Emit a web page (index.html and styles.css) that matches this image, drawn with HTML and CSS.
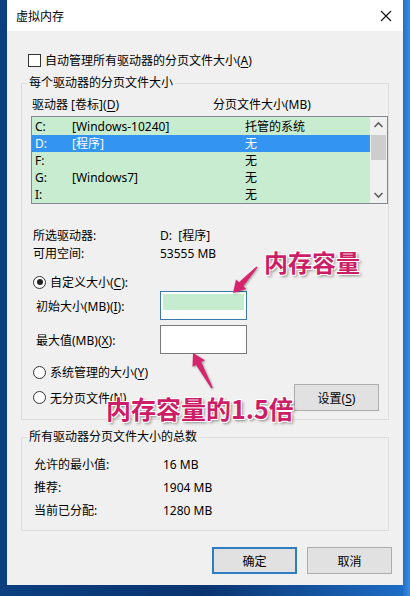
FILE: index.html
```html
<!DOCTYPE html>
<html lang="zh-CN">
<head>
  <meta charset="UTF-8" />
  <meta name="viewport" content="width=device-width, initial-scale=1.0" />
  <title>虚拟内存</title>
  <link rel="stylesheet" href="styles.css">
</head>
<body>
  <div class="desktop">
    <div class="window">
      <div class="titlebar">
        <span class="title">虚拟内存</span>
        <svg class="close" width="12" height="12" viewBox="0 0 12 12">
          <path d="M1 1 L11 11 M11 1 L1 11" stroke="#111" stroke-width="1.1" fill="none" />
        </svg>
      </div>

      <div class="content">
        <label class="check-row"><span class="checkbox"></span>自动管理所有驱动器的分页文件大小(<u>A</u>)</label>

        <!-- per drive -->
        <fieldset class="group">
          <legend>每个驱动器的分页文件大小</legend>
          <div class="list-head">
            <span class="col-head">驱动器 [卷标](<u>D</u>)</span>
            <span>分页文件大小(MB)</span>
          </div>
          <div class="listbox">
            <div class="rows">
              <div class="row"><span class="c-drive">C:</span><span class="c-label">[Windows-10240]</span><span>托管的系统</span></div>
              <div class="row selected"><span class="c-drive">D:</span><span class="c-label">[程序]</span><span>无</span></div>
              <div class="row"><span class="c-drive">F:</span><span class="c-label"></span><span>无</span></div>
              <div class="row"><span class="c-drive">G:</span><span class="c-label">[Windows7]</span><span>无</span></div>
              <div class="row"><span class="c-drive">I:</span><span class="c-label"></span><span>无</span></div>
            </div>
            <div class="scrollbar">
              <svg class="arrow" width="17" height="17" viewBox="0 0 17 17"><path d="M4.5 10 L8.5 6 L12.5 10" stroke="#606060" stroke-width="1.6" fill="none" /></svg>
              <div class="track"><div class="thumb"></div></div>
              <svg class="arrow" width="17" height="17" viewBox="0 0 17 17"><path d="M4.5 7 L8.5 11 L12.5 7" stroke="#606060" stroke-width="1.6" fill="none" /></svg>
            </div>
          </div>

          <div class="info">
            <div class="info-row"><span class="info-label">所选驱动器:</span><span>D:&nbsp;&nbsp;[程序]</span></div>
            <div class="info-row"><span class="info-label">可用空间:</span><span>53555 MB</span></div>
          </div>

          <label class="radio-row first"><span class="radio checked"></span>自定义大小(<u>C</u>):</label>
          <div class="field-row">
            <span class="field-label">初始大小(MB)(<u>I</u>):</span>
            <div class="textbox focused"><span class="fill"></span></div>
          </div>
          <div class="field-row">
            <span class="field-label">最大值(MB)(<u>X</u>):</span>
            <div class="textbox"></div>
          </div>
          <label class="radio-row"><span class="radio"></span>系统管理的大小(<u>Y</u>)</label>
          <div class="last-row">
            <label class="radio-line"><span class="radio"></span>无分页文件(<u>N</u>)</label>
            <button class="btn btn-set">设置(<u>S</u>)</button>
          </div>
        </fieldset>

        <!-- totals -->
        <fieldset class="group totals">
          <legend>所有驱动器分页文件大小的总数</legend>
          <div class="total-row"><span class="total-label">允许的最小值:</span><span>16 MB</span></div>
          <div class="total-row"><span class="total-label">推荐:</span><span>1904 MB</span></div>
          <div class="total-row"><span class="total-label">当前已分配:</span><span>1280 MB</span></div>
        </fieldset>

        <div class="actions">
          <button class="btn btn-default">确定</button>
          <button class="btn">取消</button>
        </div>
      </div>
    </div>

    <!-- annotations drawn over the screenshot -->
    <div class="note note-mem">内存容量</div>
    <div class="note note-max">内存容量的1.5倍</div>
    <svg class="pointers" width="410" height="596" viewBox="0 0 410 596">
      <polygon points="233,293 246.3,288.9 243.3,286.2 257.5,267.5 256.5,266.5 238.9,282.2 236,279.4" />
      <polygon points="193,353 204.9,360.2 201.3,362.1 212.7,387.6 211.3,388.4 196.1,364.9 192.5,366.8" />
    </svg>
  </div>
</body>
</html>
```

FILE: styles.css
```css
body {
  margin: 0;
  font-family: "Noto Sans", "Noto Sans CJK SC", sans-serif;
  font-size: 12px;
  color: #000;
}
u {
  text-decoration-thickness: 1px;
  text-underline-offset: 2px;
}
.desktop {
  position: relative;
  width: 410px;
  height: 596px;
  overflow: hidden;
  background: linear-gradient(90deg, #0b3f80 0%, #0a3470 50%, #1d6cc4 98%, #3a8de0 100%);
}
.window {
  margin-left: 7px;
  width: 396px;
  height: 585px;
  background: #f0f0f0;
  box-sizing: border-box;
}
.titlebar {
  height: 31px;
  background: #fff;
  display: flex;
  align-items: center;
  justify-content: space-between;
  padding: 0 11px 0 9px;
}
.title {
  font-size: 12px;
}
.content {
  padding: 0 14px;
}
.check-row {
  display: flex;
  align-items: center;
  height: 16px;
  margin-top: 21px;
  padding-left: 7px;
}
.checkbox {
  width: 11px;
  height: 11px;
  border: 1px solid #333;
  background: #fff;
  margin-right: 4px;
}
.group {
  margin: 7px 0 0;
  padding: 0 0 8px 9px;
  border: 1px solid #dcdcdc;
  min-width: 0;
}
.group legend {
  margin-left: -4px;
  padding: 0 2px;
  line-height: 16px;
}
.list-head {
  display: flex;
  margin-top: 6px;
  line-height: 16px;
  padding-left: 1px;
}
.col-head {
  width: 181px;
}
.listbox {
  display: flex;
  height: 86px;
  margin-top: 3px;
  border: 1px solid #828790;
  background: #c8ecd0;
}
.rows {
  flex: 1;
  padding-top: 1px;
}
.row {
  display: flex;
  height: 17px;
  line-height: 17px;
  padding-left: 3px;
}
.row.selected {
  background: #3394f2;
  color: #fff;
}
.c-drive {
  width: 37px;
}
.c-label {
  width: 173px;
}
.scrollbar {
  width: 17px;
  display: flex;
  flex-direction: column;
  background: #f0f0f0;
}
.track {
  flex: 1;
  padding: 1px 1px 0;
}
.thumb {
  height: 25px;
  background: #cdcdcd;
}
.info {
  margin-top: 23px;
}
.info-row {
  display: flex;
  line-height: 18px;
  padding-left: 2px;
}
.info-label {
  width: 127px;
}
.radio-row {
  display: flex;
  align-items: center;
  height: 18px;
  margin-top: 9px;
  padding-left: 2px;
}
.radio-row.first {
  margin-top: 10px;
}
.radio-line {
  display: flex;
  align-items: center;
}
.radio {
  width: 11px;
  height: 11px;
  border: 1px solid #333;
  border-radius: 50%;
  background: #fff;
  margin-right: 4px;
  position: relative;
}
.radio.checked::after {
  content: "";
  position: absolute;
  left: 2.5px;
  top: 2.5px;
  width: 6px;
  height: 6px;
  border-radius: 50%;
  background: #222;
}
.field-row {
  display: flex;
  align-items: center;
  margin-top: 5px;
}
.radio-row.first + .field-row {
  margin-top: 0;
}
.field-label {
  width: 124px;
  padding-left: 5px;
}
.textbox {
  border: 1px solid #7a7a7a;
  background: #fff;
  padding: 2px;
  width: 81px;
  height: 23px;
}
.textbox.focused {
  border-color: #3b7aa8;
}
.fill {
  display: block;
  height: 16px;
  background: #c6ecd0;
}
.last-row {
  display: flex;
  align-items: center;
  justify-content: space-between;
  height: 27px;
  margin-top: 3px;
  padding-left: 2px;
  padding-right: 9px;
}
.btn {
  width: 85px;
  height: 27px;
  border: 1px solid #adadad;
  background: #e1e1e1;
  font-family: "Noto Sans", "Noto Sans CJK SC", sans-serif;
  font-size: 12px;
  color: #000;
  padding: 0;
}
.totals {
  margin-top: 9px;
}
.total-row {
  display: flex;
  line-height: 23px;
  padding-left: 3px;
}
.totals legend + .total-row {
  margin-top: 8px;
}
.total-label {
  width: 129px;
}
.actions {
  display: flex;
  justify-content: flex-end;
  gap: 10px;
  margin-top: 16px;
  margin-right: -3px;
}
.btn-default {
  border: 2px solid #2f7bc4;
}
.note {
  position: absolute;
  color: #cc1e66;
  font-family: "Noto Sans CJK SC", sans-serif;
  font-weight: bold;
  white-space: nowrap;
  line-height: 1;
  text-shadow: 1px 1px 0 #fff, -1px -1px 0 #fff, 1px -1px 0 #fff, -1px 1px 0 #fff, 2px 2px 3px rgba(0, 0, 0, 0.45);
}
.note-mem {
  left: 264px;
  top: 250px;
  font-size: 24px;
}
.note-max {
  left: 106px;
  top: 396px;
  font-size: 25px;
}
.pointers {
  position: absolute;
  left: 0;
  top: 0;
  fill: #d8246c;
  filter: drop-shadow(1px 1px 1px rgba(0, 0, 0, 0.35));
}
```
